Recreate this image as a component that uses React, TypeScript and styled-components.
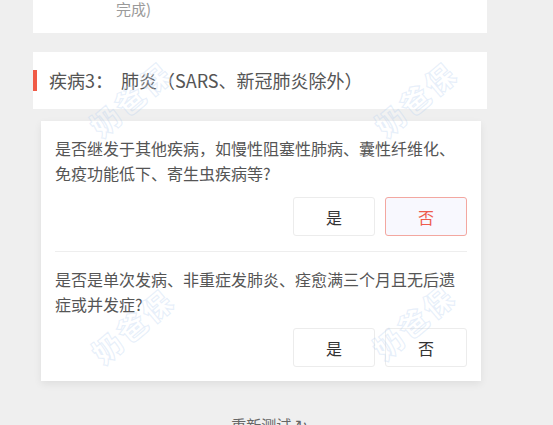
import React from "react";
import styled, { createGlobalStyle } from "styled-components";

const Global = createGlobalStyle`
  html, body { margin: 0; padding: 0; background: #efefef; }
  body { font-family: "Noto Sans CJK SC", "Liberation Sans", sans-serif; overflow: hidden; }
  * { box-sizing: border-box; }
`;

const Page = styled.div`
  position: relative;
  width: 553px;
  height: 425px;
  overflow: hidden;
  display: flex;
  flex-direction: column;
  & > * { flex-shrink: 0; }
`;

const TopCard = styled.div`
  margin-left: 33px;
  width: 454px;
  background: #fff;
  padding: 0 0 16px 83px;
  font-size: 15px;
  line-height: 17px;
  color: #9a9a9a;
`;

const HeaderCard = styled.div`
  margin: 19px 0 0 33px;
  width: 454px;
  height: 57px;
  background: #fff;
  display: flex;
  align-items: center;
`;

const Bar = styled.div`
  width: 4px;
  height: 21px;
  background: #f05a46;
  margin-right: 12px;
`;

const Title = styled.div`
  font-size: 18px;
  color: #555;
  display: flex;
  align-items: center;
  margin-top: -1px;
`;

const Name = styled.span`
  margin-left: 8px;
`;

const QuestionCard = styled.div`
  margin: 12px 0 0 41px;
  width: 440px;
  background: #fff;
  padding: 0 14px;
  box-shadow: 0 3px 8px rgba(0, 0, 0, 0.07);
`;

const Block = styled.div<{ $divider?: boolean }>`
  padding: 15px 0 ${(p) => (p.$divider ? "15px" : "14px")};
  border-bottom: ${(p) => (p.$divider ? "1px solid #eeeeee" : "none")};
`;

const QText = styled.div`
  font-size: 16px;
  line-height: 25px;
  color: #555;
`;

const Buttons = styled.div`
  display: flex;
  justify-content: flex-end;
  gap: 10px;
  margin-top: 11px;
`;

const Btn = styled.div<{ $active?: boolean }>`
  width: 82px;
  height: 39px;
  border-radius: 3px;
  border: 1px solid ${(p) => (p.$active ? "#f3a7a0" : "#ececec")};
  background: ${(p) => (p.$active ? "#f8f8fe" : "#fff")};
  color: ${(p) => (p.$active ? "#ee5b4c" : "#333")};
  font-size: 16px;
  display: flex;
  align-items: center;
  justify-content: center;
`;

const Retest = styled.div`
  margin-top: 33px;
  text-align: center;
  font-size: 15px;
  color: #666;
  padding-right: 14px;
`;

const Mark = styled.div`
  position: absolute;
  pointer-events: none;
  font-size: 29px;
  font-weight: 900;
  letter-spacing: 3px;
  color: rgba(255, 255, 255, 0.2);
  -webkit-text-stroke: 1.2px rgba(170, 200, 238, 0.28);
  transform: translate(-50%, -50%) rotate(-40deg);
  white-space: nowrap;
`;

const marks = [
  { x: 130, y: 98 },
  { x: 415, y: 98 },
  { x: 132, y: 325 },
  { x: 413, y: 321 },
];

export default function App() {
  return (
    <Page>
      <Global />
      <TopCard>完成)</TopCard>
      <HeaderCard>
        <Bar />
        <Title>
          疾病3：<Name>肺炎（SARS、新冠肺炎除外）</Name>
        </Title>
      </HeaderCard>
      <QuestionCard>
        <Block $divider>
          <QText>是否继发于其他疾病，如慢性阻塞性肺病、囊性纤维化、免疫功能低下、寄生虫疾病等?</QText>
          <Buttons>
            <Btn>是</Btn>
            <Btn $active>否</Btn>
          </Buttons>
        </Block>
        <Block>
          <QText>是否是单次发病、非重症发肺炎、痊愈满三个月且无后遗症或并发症?</QText>
          <Buttons>
            <Btn>是</Btn>
            <Btn>否</Btn>
          </Buttons>
        </Block>
      </QuestionCard>
      <Retest>重新测试 ↻</Retest>
      {marks.map((m, i) => (
        <Mark key={i} style={{ left: m.x, top: m.y }}>
          奶爸保
        </Mark>
      ))}
    </Page>
  );
}
